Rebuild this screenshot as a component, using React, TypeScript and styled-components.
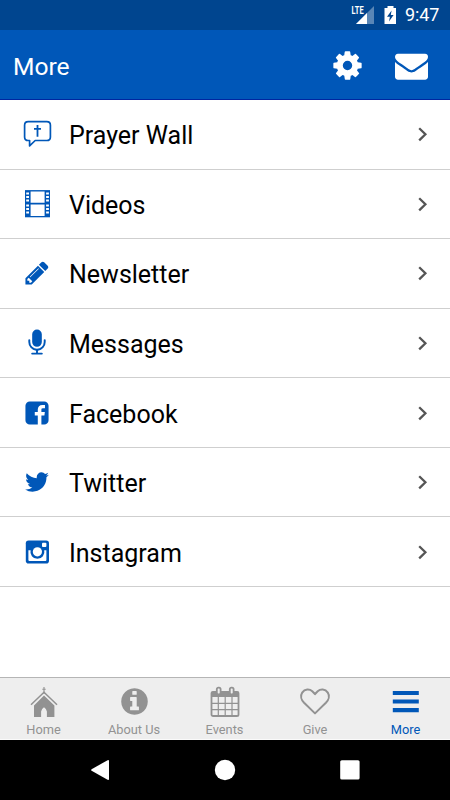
import React from 'react';
import styled, { createGlobalStyle } from 'styled-components';

const BLUE = '#0057b8';

const GlobalStyle = createGlobalStyle`
  * { box-sizing: border-box; }
  body { margin: 0; background: #fff; font-family: Roboto, "Liberation Sans", sans-serif; }
  svg { display: block; flex: none; }
`;

const Screen = styled.div`
  width: 450px;
  height: 800px;
  display: flex;
  flex-direction: column;
  overflow: hidden;
  background: #fff;
`;

const StatusBar = styled.div`
  height: 30px;
  flex: none;
  background: #00458f;
  color: #fff;
  display: flex;
  align-items: center;
  justify-content: flex-end;
  padding-right: 10px;
`;

const Clock = styled.span`
  font-size: 18px;
  line-height: 30px;
  width: 35px;
  margin-left: 8px;
  white-space: nowrap;
  letter-spacing: -0.1px;
`;

const Header = styled.header`
  height: 70px;
  flex: none;
  display: flex;
  align-items: center;
  padding: 1px 22px 0 13px;
  background: ${BLUE};
  border-bottom: 1px solid #0026a0;
  color: #fff;
`;

const Title = styled.h1`
  flex: 1;
  margin: 0;
  padding-top: 3px;
  font-size: 24.6px;
  font-weight: 400;
`;

const HeaderActions = styled.div`
  display: flex;
  align-items: center;
  gap: 31px;
`;

const List = styled.div`
  flex: 1;
`;

const Row = styled.div`
  height: 69.57px;
  display: flex;
  align-items: center;
  padding: 0 21px 0 22px;
  border-bottom: 1px solid #cfcfcf;
  color: ${BLUE};
`;

const RowLabel = styled.span`
  flex: 1;
  margin-left: 17px;
  padding-top: 4px;
  font-size: 25px;
  line-height: 30px;
  color: #000;
`;

const TabBar = styled.nav`
  height: 63px;
  flex: none;
  display: grid;
  grid-template-columns: repeat(5, 90.5px);
  justify-content: center;
  padding-right: 1px;
  background: #eee;
  border-top: 1px solid #b5b5b5;
  border-bottom: 1px solid #fafafa;
`;

const Tab = styled.div<{ $active?: boolean }>`
  display: flex;
  flex-direction: column;
  align-items: center;
  padding-top: 8px;
  color: ${(p) => (p.$active ? BLUE : '#929292')};
`;

const TabLabel = styled.span`
  font-size: 12.8px;
  line-height: 16px;
  margin-top: 4px;
`;

const SystemNav = styled.div`
  height: 60px;
  flex: none;
  display: grid;
  grid-template-columns: repeat(3, 125px);
  justify-content: center;
  align-items: center;
  justify-items: center;
  background: #000;
`;

const Glyph = ({ d, size }: { d: string; size: number }) => (
  <svg width={size} height={size} viewBox="0 0 1792 1792" fill="currentColor">
    <path d={d} />
  </svg>
);

/* 27px glyph centred in the 30px slot shared by all list icons */
const RowGlyph = ({ d }: { d: string }) => (
  <svg width="30" height="30" viewBox="-100 -100 1992 1992" fill="currentColor">
    <path d={d} />
  </svg>
);

const COG =
  'M1152 896q0-106-75-181t-181-75-181 75-75 181 75 181 181 75 181-75 75-181zm512-109v222q0 12-8 23t-20 13l-185 28q-19 54-39 91 35 50 107 138 10 12 10 25t-9 23q-27 37-99 108t-94 71q-12 0-26-9l-138-108q-44 23-91 38-16 136-29 186-7 28-36 28h-222q-14 0-24.5-8.5t-11.5-21.5l-28-184q-49-16-90-37l-141 107q-10 9-25 9-14 0-25-11-126-114-165-168-7-10-7-23 0-12 8-23 15-21 51-66.5t54-70.5q-27-50-41-99l-183-27q-13-2-21-12.5t-8-23.5v-222q0-12 8-23t19-13l186-28q14-46 39-92-40-57-107-138-10-12-10-24 0-10 9-23 26-36 98.5-107.5t94.5-71.5q13 0 26 10l138 107q44-23 91-38 16-136 29-186 7-28 36-28h222q14 0 24.5 8.5t11.5 21.5l28 184q49 16 90 37l142-107q9-9 24-9 13 0 25 10 129 119 165 170 7 8 7 22 0 12-8 23-15 21-51 66.5t-54 70.5q26 50 41 98l183 28q13 2 21 12.5t8 23.5z';
const ENVELOPE =
  'M1792 710v794q0 66-47 113t-113 47h-1472q-66 0-113-47t-47-113v-794q44 49 101 87 362 246 497 345 57 42 92.5 65.5t94.5 48 110 24.5h2q51 0 110-24.5t94.5-48 92.5-65.5q170-123 498-345 57-39 100-87zm0-294q0 79-49 151t-122 123q-376 261-468 325-10 7-42.5 31t-54 38-52 31.5-57.5 27-50 9h-2q-23 0-50-9t-57.5-27-52-31.5-54-38-42.5-31q-91-64-262-182.5t-205-142.5q-62-42-117-115.5t-55-136.5q0-78 41.5-130t118.5-52h1472q65 0 112.5 47t47.5 113z';
const PENCIL =
  'M491 1536l91-91-235-235-91 91v107h128v128h107zm523-928q0-22-22-22-10 0-17 7l-542 542q-7 7-7 17 0 22 22 22 10 0 17-7l542-542q7-7 7-17zm-54-192l416 416-832 832h-416v-416zm683 96q0 53-37 90l-166 166-416-416 166-165q36-38 90-38 53 0 91 38l235 234q37 39 37 91z';
const MICROPHONE =
  'M1472 704v128q0 221-147.5 384.5t-364.5 187.5v132h256q26 0 45 19t19 45-19 45-45 19h-640q-26 0-45-19t-19-45 19-45 45-19h256v-132q-217-24-364.5-187.5t-147.5-384.5v-128q0-26 19-45t45-19 45 19 19 45v128q0 185 131.5 316.5t316.5 131.5 316.5-131.5 131.5-316.5v-128q0-26 19-45t45-19 45 19 19 45zm-256-384v512q0 132-94 226t-226 94-226-94-94-226v-512q0-132 94-226t226-94 226 94 94 226z';
const FACEBOOK =
  'M1376 128q119 0 203.5 84.5t84.5 203.5v960q0 119-84.5 203.5t-203.5 84.5h-188v-595h199l30-232h-229v-148q0-56 23.5-84t91.5-28l122-1v-207q-63-9-178-9-136 0-217.5 80t-81.5 226v171h-200v232h200v595h-532q-119 0-203.5-84.5t-84.5-203.5v-960q0-119 84.5-203.5t203.5-84.5h960z';
const TWITTER =
  'M1684 408q-67 98-162 167 1 14 1 42 0 130-38 259.5t-115.5 248.5-184.5 210.5-258 146-323 54.5q-271 0-496-145 35 4 78 4 225 0 401-138-105-2-188-64.5t-114-159.5q33 5 61 5 43 0 85-11-112-23-185.5-111.5t-73.5-205.5v-4q68 38 146 41-66-44-105-115t-39-154q0-88 44-163 121 149 294.5 238.5t371.5 99.5q-8-38-8-74 0-134 94.5-228.5t228.5-94.5q140 0 236 102 109-21 205-78-37 115-142 178 93-10 186-50z';
const INFO =
  'M1152 1376v-160q0-14-9-23t-23-9h-96v-512q0-14-9-23t-23-9h-320q-14 0-23 9t-9 23v160q0 14 9 23t23 9h96v320h-96q-14 0-23 9t-9 23v160q0 14 9 23t23 9h448q14 0 23-9t9-23zm-128-896v-160q0-14-9-23t-23-9h-192q-14 0-23 9t-9 23v160q0 14 9 23t23 9h192q14 0 23-9t9-23zm640 416q0 209-103 385.5t-279.5 279.5-385.5 103-385.5-103-279.5-279.5-103-385.5 103-385.5 279.5-279.5 385.5-103 385.5 103 279.5 279.5 103 385.5z';

const PrayerIcon = () => (
  <svg width="30" height="30" viewBox="0 0 30 30" fill="none" stroke="currentColor">
    <path
      d="M6.2 2.6H24.8Q28.4 2.6 28.4 6.2V17.9Q28.4 21.5 24.8 21.5H13.2L7.6 26.9V21.5H6.2Q2.6 21.5 2.6 17.9V6.2Q2.6 2.6 6.2 2.6Z"
      strokeWidth="1.7"
      strokeLinejoin="round"
    />
    <path d="M15.5 6.1V17.7M12 9.8H19" strokeWidth="1.8" />
  </svg>
);

const HOLES = [4.6, 8.1, 11.6, 16.4, 19.9, 23.4];

const FilmIcon = () => (
  <svg width="30" height="30" viewBox="0 0 30 30">
    <path fill="currentColor" d="M3 1.1H28V28.3H3Z" />
    <path fill="#fff" d="M8.6 2.4H22.6V13.7H8.6ZM8.6 15.5H22.6V26.9H8.6Z" />
    {HOLES.map((y) => (
      <path key={y} fill="#fff" d={`M4.2 ${y - 1}h2.8v2h-2.8zM24.1 ${y - 1}h2.8v2h-2.8z`} />
    ))}
  </svg>
);

const InstagramIcon = () => (
  <svg width="30" height="30" viewBox="0 0 30 30">
    <rect x="3.8" y="3.4" width="23.2" height="23.2" rx="2.8" fill="currentColor" />
    <path
      fill="#fff"
      d="M6.4 13.2H8.6A7 7 0 1 0 22.2 13.2H24.4V23Q24.4 24 23.4 24H7.4Q6.4 24 6.4 23Z"
    />
    <rect x="20" y="5.8" width="4.4" height="4.2" rx="0.9" fill="#fff" />
    <circle cx="15.4" cy="14.8" r="5.6" fill="currentColor" />
    <circle cx="15.4" cy="14.8" r="4.6" fill="#fff" />
  </svg>
);

const Chevron = () => (
  <svg width="12" height="18" viewBox="0 0 12 18" fill="none" stroke="#555" strokeWidth="2.3">
    <path d="M2.2 3.2L8.4 9.3L2.2 15.4" />
  </svg>
);

const ChurchIcon = () => (
  <svg width="32" height="32" viewBox="0 0 32 32" fill="none" stroke="currentColor">
    <path d="M16 1V8M14.3 3.2H17.7" strokeWidth="1.1" />
    <path d="M3 18.8L16 6.3L29 18.8" strokeWidth="1.5" />
    <path
      d="M16 9.6L26.4 19.6V31H18.9V25.5Q18.9 23.2 16 21.2Q13.1 23.2 13.1 25.5V31H6V19.6Z"
      fill="currentColor"
      stroke="none"
    />
  </svg>
);

const CalendarIcon = () => (
  <svg width="32" height="32" viewBox="0 0 32 32" fill="none" stroke="currentColor">
    <rect x="2.5" y="6" width="27" height="24" rx="1.6" strokeWidth="1.8" />
    <path d="M2.5 5.6H29.8V11H2.5Z" fill="currentColor" stroke="none" />
    <path d="M9.3 11V30M16.2 11V30M23 11V30M3 17.4H29M3 23.6H29" strokeWidth="1.2" />
    <rect x="7.8" y="1.6" width="3.8" height="6.8" rx="1.6" fill="#eee" strokeWidth="1.8" />
    <rect x="20.8" y="1.6" width="3.8" height="6.8" rx="1.6" fill="#eee" strokeWidth="1.8" />
  </svg>
);

const HeartIcon = () => (
  <svg width="32" height="32" viewBox="0 0 32 32" fill="none" stroke="currentColor">
    <path
      d="M16 27.4L5.1 16.8C2.2 13.8 1.2 9.6 3.2 6.6C5.8 2.7 10.6 2.9 13.3 5.3Q14.8 6.7 16 8.2Q17.2 6.7 18.7 5.3C21.4 2.9 26.2 2.7 28.8 6.6C30.8 9.6 29.8 13.8 26.9 16.8Z"
      strokeWidth="2"
      strokeLinejoin="round"
    />
  </svg>
);

const BarsIcon = () => (
  <svg width="32" height="32" viewBox="0 0 32 32" fill="currentColor">
    <path d="M2.8 5H28.8V9.1H2.8ZM2.8 13.5H28.8V17.6H2.8ZM2.8 22.1H28.8V26.2H2.8Z" />
  </svg>
);

const LteText = styled.text`
  font: 700 10px Roboto, sans-serif;
`;

const SignalIcons = () => (
  <svg width="46" height="30" viewBox="0 0 46 30" fill="#fff">
    <path d="M23 6V24H5Z" opacity="0.35" />
    <path d="M16 13V24H5Z" />
    <path d="M0 5H13V15H0Z" fill="#00458f" />
    <LteText x="0.6" y="13.6" textLength="12" lengthAdjust="spacingAndGlyphs">
      LTE
    </LteText>
    <path d="M36.5 6H42.5V8H45V24H33.5V8H36.5Z" />
    <path d="M40.6 10.5L36 16.7H38.9L38 21.5L42.6 15H39.8Z" fill="#00458f" />
  </svg>
);

const rows = [
  { label: 'Prayer Wall', icon: <PrayerIcon /> },
  { label: 'Videos', icon: <FilmIcon /> },
  { label: 'Newsletter', icon: <RowGlyph d={PENCIL} /> },
  { label: 'Messages', icon: <RowGlyph d={MICROPHONE} /> },
  { label: 'Facebook', icon: <RowGlyph d={FACEBOOK} /> },
  { label: 'Twitter', icon: <RowGlyph d={TWITTER} /> },
  { label: 'Instagram', icon: <InstagramIcon /> },
];

const tabs = [
  { label: 'Home', icon: <ChurchIcon /> },
  { label: 'About Us', icon: <Glyph d={INFO} size={31} /> },
  { label: 'Events', icon: <CalendarIcon /> },
  { label: 'Give', icon: <HeartIcon /> },
  { label: 'More', icon: <BarsIcon />, active: true },
];

const IconSlot = styled.div`
  height: 32px;
`;

export default function App() {
  return (
    <Screen>
      <GlobalStyle />
      <StatusBar>
        <SignalIcons />
        <Clock>9:47</Clock>
      </StatusBar>
      <Header>
        <Title>More</Title>
        <HeaderActions>
          <Glyph d={COG} size={33} />
          <Glyph d={ENVELOPE} size={33} />
        </HeaderActions>
      </Header>
      <List>
        {rows.map((r) => (
          <Row key={r.label}>
            {r.icon}
            <RowLabel>{r.label}</RowLabel>
            <Chevron />
          </Row>
        ))}
      </List>
      <TabBar>
        {tabs.map((t) => (
          <Tab key={t.label} $active={t.active}>
            <IconSlot>{t.icon}</IconSlot>
            <TabLabel>{t.label}</TabLabel>
          </Tab>
        ))}
      </TabBar>
      <SystemNav>
        <svg width="22" height="22" viewBox="0 0 22 22" fill="#fff">
          <path d="M2.6 10.2L18.6 1.2Q20 .6 20 2V20Q20 21.4 18.6 20.8L2.6 11.8Q1.6 11 2.6 10.2Z" />
        </svg>
        <svg width="22" height="22" viewBox="0 0 22 22" fill="#fff">
          <circle cx="11" cy="11" r="10.2" />
        </svg>
        <svg width="22" height="22" viewBox="0 0 22 22" fill="#fff">
          <rect x="1.2" y="1.2" width="19.4" height="19.4" rx="1.6" />
        </svg>
      </SystemNav>
    </Screen>
  );
}
